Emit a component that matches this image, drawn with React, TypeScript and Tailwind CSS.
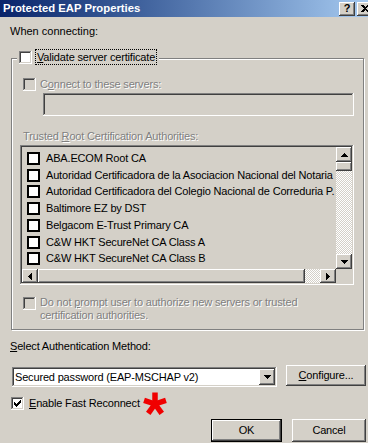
import React from "react";

const RAISED =
  "shadow-[inset_-1px_-1px_#404040,inset_1px_1px_#ffffff,inset_-2px_-2px_#808080,inset_2px_2px_#d4d0c8]";
const SUNKEN =
  "shadow-[inset_-1px_-1px_#ffffff,inset_1px_1px_#808080,inset_-2px_-2px_#d4d0c8,inset_2px_2px_#404040]";
const DITHER =
  "bg-[image:conic-gradient(#ffffff_25%,#d4d0c8_0_50%,#ffffff_0_75%,#d4d0c8_0)] bg-[length:2px_2px]";
const DIS = "text-[#808080] [text-shadow:1px_1px_0_#ffffff]";

function CheckBox({ checked = false, disabled = false }: { checked?: boolean; disabled?: boolean }) {
  return (
    <div
      className={`w-[13px] h-[13px] shrink-0 flex items-center justify-center ${SUNKEN} ${
        disabled ? "bg-[#d4d0c8]" : "bg-white"
      }`}
    >
      {checked && (
        <svg width="7" height="7" viewBox="0 0 7 7" shapeRendering="crispEdges">
          <path d="M6 0H7V3H6V4H5V5H4V6H3V7H2V6H1V5H0V2H1V3H2V4H3V3H4V2H5V1H6Z" fill="#000" />
        </svg>
      )}
    </div>
  );
}

function Arrow({ dir }: { dir: "up" | "down" | "left" | "right" }) {
  const d = {
    down: "M0 0H7V1H6V2H5V3H4V4H3V3H2V2H1V1H0Z",
    up: "M3 0H4V1H5V2H6V3H7V4H0V3H1V2H2V1H3Z",
    right: "M0 0H1V1H2V2H3V3H4V4H3V5H2V6H1V7H0Z",
    left: "M4 0V7H3V6H2V5H1V4H0V3H1V2H2V1H3V0Z",
  }[dir];
  const horiz = dir === "up" || dir === "down";
  return (
    <svg
      width={horiz ? 7 : 4}
      height={horiz ? 4 : 7}
      viewBox={horiz ? "0 0 7 4" : "0 0 4 7"}
      shapeRendering="crispEdges"
    >
      <path d={d} fill="#000" />
    </svg>
  );
}

function ListCheck() {
  return <div className="w-[13px] h-[13px] shrink-0 border-2 border-black bg-white" />;
}

const certs = [
  "ABA.ECOM Root CA",
  "Autoridad Certificadora de la Asociacion Nacional del Notaria",
  "Autoridad Certificadora del Colegio Nacional de Correduria P.",
  "Baltimore EZ by DST",
  "Belgacom E-Trust Primary CA",
  "C&W HKT SecureNet CA Class A",
  "C&W HKT SecureNet CA Class B",
];

function Asterisk() {
  const arms = [-90, -18, 54, 126, 198];
  return (
    <svg width="26" height="26" viewBox="-13 -13 26 26" className="shrink-0 -my-[7px] -ml-[3px]">
      {arms.map((a) => (
        <line
          key={a}
          x1="0"
          y1="0"
          x2={(11.5 * Math.cos((a * Math.PI) / 180)).toFixed(2)}
          y2={(11.5 * Math.sin((a * Math.PI) / 180)).toFixed(2)}
          stroke="#f00000"
          strokeWidth="5.5"
        />
      ))}
    </svg>
  );
}

export default function App() {
  return (
    <div className="w-[368px] h-[443px] overflow-hidden bg-[#d4d0c8] text-black text-[11px] leading-[13px] tracking-[-0.17px] font-['Liberation_Sans',Arial,sans-serif] flex flex-col">
      {/* Title bar */}
      <div className="h-[17px] shrink-0 flex items-center bg-linear-to-r from-[#0a246a] to-[#a6caf0]">
        <div className="flex-1 pl-[3px] text-white font-bold tracking-normal text-[11.3px]">Protected EAP Properties</div>
        <div className="flex gap-[2px] mr-[-5px] shrink-0">
          <div className={`w-[16px] h-[14px] bg-[#d4d0c8] ${RAISED} flex items-center justify-center font-bold text-[11px] leading-none`}>
            ?
          </div>
          <div className={`w-[16px] h-[14px] bg-[#d4d0c8] ${RAISED} flex items-center justify-center`}>
            <svg width="8" height="7" viewBox="0 0 8 7" shapeRendering="crispEdges">
              <path d="M0 0H2L4 2 6 0H8L5 3.5 8 7H6L4 5 2 7H0L3 3.5Z" fill="#000" />
            </svg>
          </div>
        </div>
      </div>

      <div className="ml-[10px] mt-[8px] h-[13px] tracking-normal">When connecting:</div>

      {/* Group box */}
      <div className="relative ml-[11px] mt-[20px] w-[353px] h-[272px] shrink-0 border border-[#808080] shadow-[1px_1px_0_#ffffff,inset_1px_1px_0_#ffffff] flex flex-col">
        <div className="absolute left-[5px] top-[-10px] h-[16px] bg-[#d4d0c8] pl-[2px] pr-[2px] flex items-center gap-[3px]">
          <CheckBox />
          <div className="h-[16px] border border-dotted border-black px-[1px] flex items-center">
            <span>
              <u>V</u>alidate server certificate
            </span>
          </div>
        </div>

        <div className="mt-[19px] ml-[11px] h-[13px] flex items-center gap-[4px]">
          <CheckBox disabled />
          <span className={DIS}>
            C<u>o</u>nnect to these servers:
          </span>
        </div>

        <div className={`ml-[31px] mt-[2px] w-[311px] h-[23px] shrink-0 bg-[#d4d0c8] ${SUNKEN}`} />

        <div className={`ml-[11px] mt-[14px] h-[13px] ${DIS}`}>
          Trusted <u>R</u>oot Certification Authorities:
        </div>

        {/* List box */}
        <div className={`ml-[8px] mt-[2px] w-[334px] h-[140px] shrink-0 p-[2px] bg-[#d4d0c8] ${SUNKEN}`}>
          <div className="grid grid-cols-[1fr_16px] grid-rows-[1fr_14px] h-full">
            <div className="overflow-hidden pt-[3px]">
              {certs.map((c) => (
                <div key={c} className="h-[16.75px] flex items-center whitespace-nowrap">
                  <div className="ml-[5px]">
                    <ListCheck />
                  </div>
                  <span className="ml-[6px]">{c}</span>
                </div>
              ))}
            </div>
            <div className="flex flex-col">
              <div className={`h-[15px] shrink-0 bg-[#d4d0c8] ${RAISED} flex items-center justify-center`}>
                <Arrow dir="up" />
              </div>
              <div className={`h-[9px] shrink-0 bg-[#d4d0c8] ${RAISED}`} />
              <div className={`flex-1 ${DITHER}`} />
              <div className={`h-[15px] shrink-0 bg-[#d4d0c8] ${RAISED} flex items-center justify-center`}>
                <Arrow dir="down" />
              </div>
            </div>
            <div className="flex">
              <div className={`w-[16px] shrink-0 bg-[#d4d0c8] ${RAISED} flex items-center justify-center`}>
                <Arrow dir="left" />
              </div>
              <div className={`w-[267px] shrink-0 bg-[#d4d0c8] ${RAISED}`} />
              <div className={`flex-1 ${DITHER}`} />
              <div className={`w-[16px] shrink-0 bg-[#d4d0c8] ${RAISED} flex items-center justify-center`}>
                <Arrow dir="right" />
              </div>
            </div>
            <div className="bg-[#d4d0c8]" />
          </div>
        </div>

        <div className="mt-[12px] ml-[11px] flex items-start gap-[4px]">
          <CheckBox disabled />
          <span className={`${DIS} -mt-[1px] w-[300px]`}>
            Do not <u>p</u>rompt user to authorize new servers or trusted
            <br />
            certification authorities.
          </span>
        </div>
      </div>

      <div className="ml-[10px] mt-[10px] h-[13px]">
        <u>S</u>elect Authentication Method:
      </div>

      <div className="mt-[12px] flex items-start shrink-0">
        <div className={`ml-[12px] mt-[2px] w-[265px] h-[20px] p-[2px] bg-white ${SUNKEN} flex`}>
          <div className="flex-1 pl-[1px] flex items-center whitespace-nowrap">Secured password (EAP-MSCHAP v2)</div>
          <div className={`w-[16px] h-full bg-[#d4d0c8] ${RAISED} flex items-center justify-center`}>
            <Arrow dir="down" />
          </div>
        </div>
        <div className={`ml-[9px] w-[80px] h-[21px] bg-[#d4d0c8] ${RAISED} flex items-center justify-center`}>
          <span>
            <u>C</u>onfigure...
          </span>
        </div>
      </div>

      <div className="mt-[10px] ml-[11px] h-[13px] flex items-center gap-[5px]">
        <CheckBox checked />
        <span>
          <u>E</u>nable Fast Reconnect
        </span>
        <Asterisk />
      </div>

      <div className="mt-[9px] flex justify-end gap-[10px] pr-[2px]">
        <div className="w-[71px] h-[23px] border border-black">
          <div className={`w-full h-full bg-[#d4d0c8] ${RAISED} flex items-center justify-center`}>OK</div>
        </div>
        <div className={`w-[74px] h-[23px] bg-[#d4d0c8] ${RAISED} flex items-center justify-center`}>Cancel</div>
      </div>
    </div>
  );
}
